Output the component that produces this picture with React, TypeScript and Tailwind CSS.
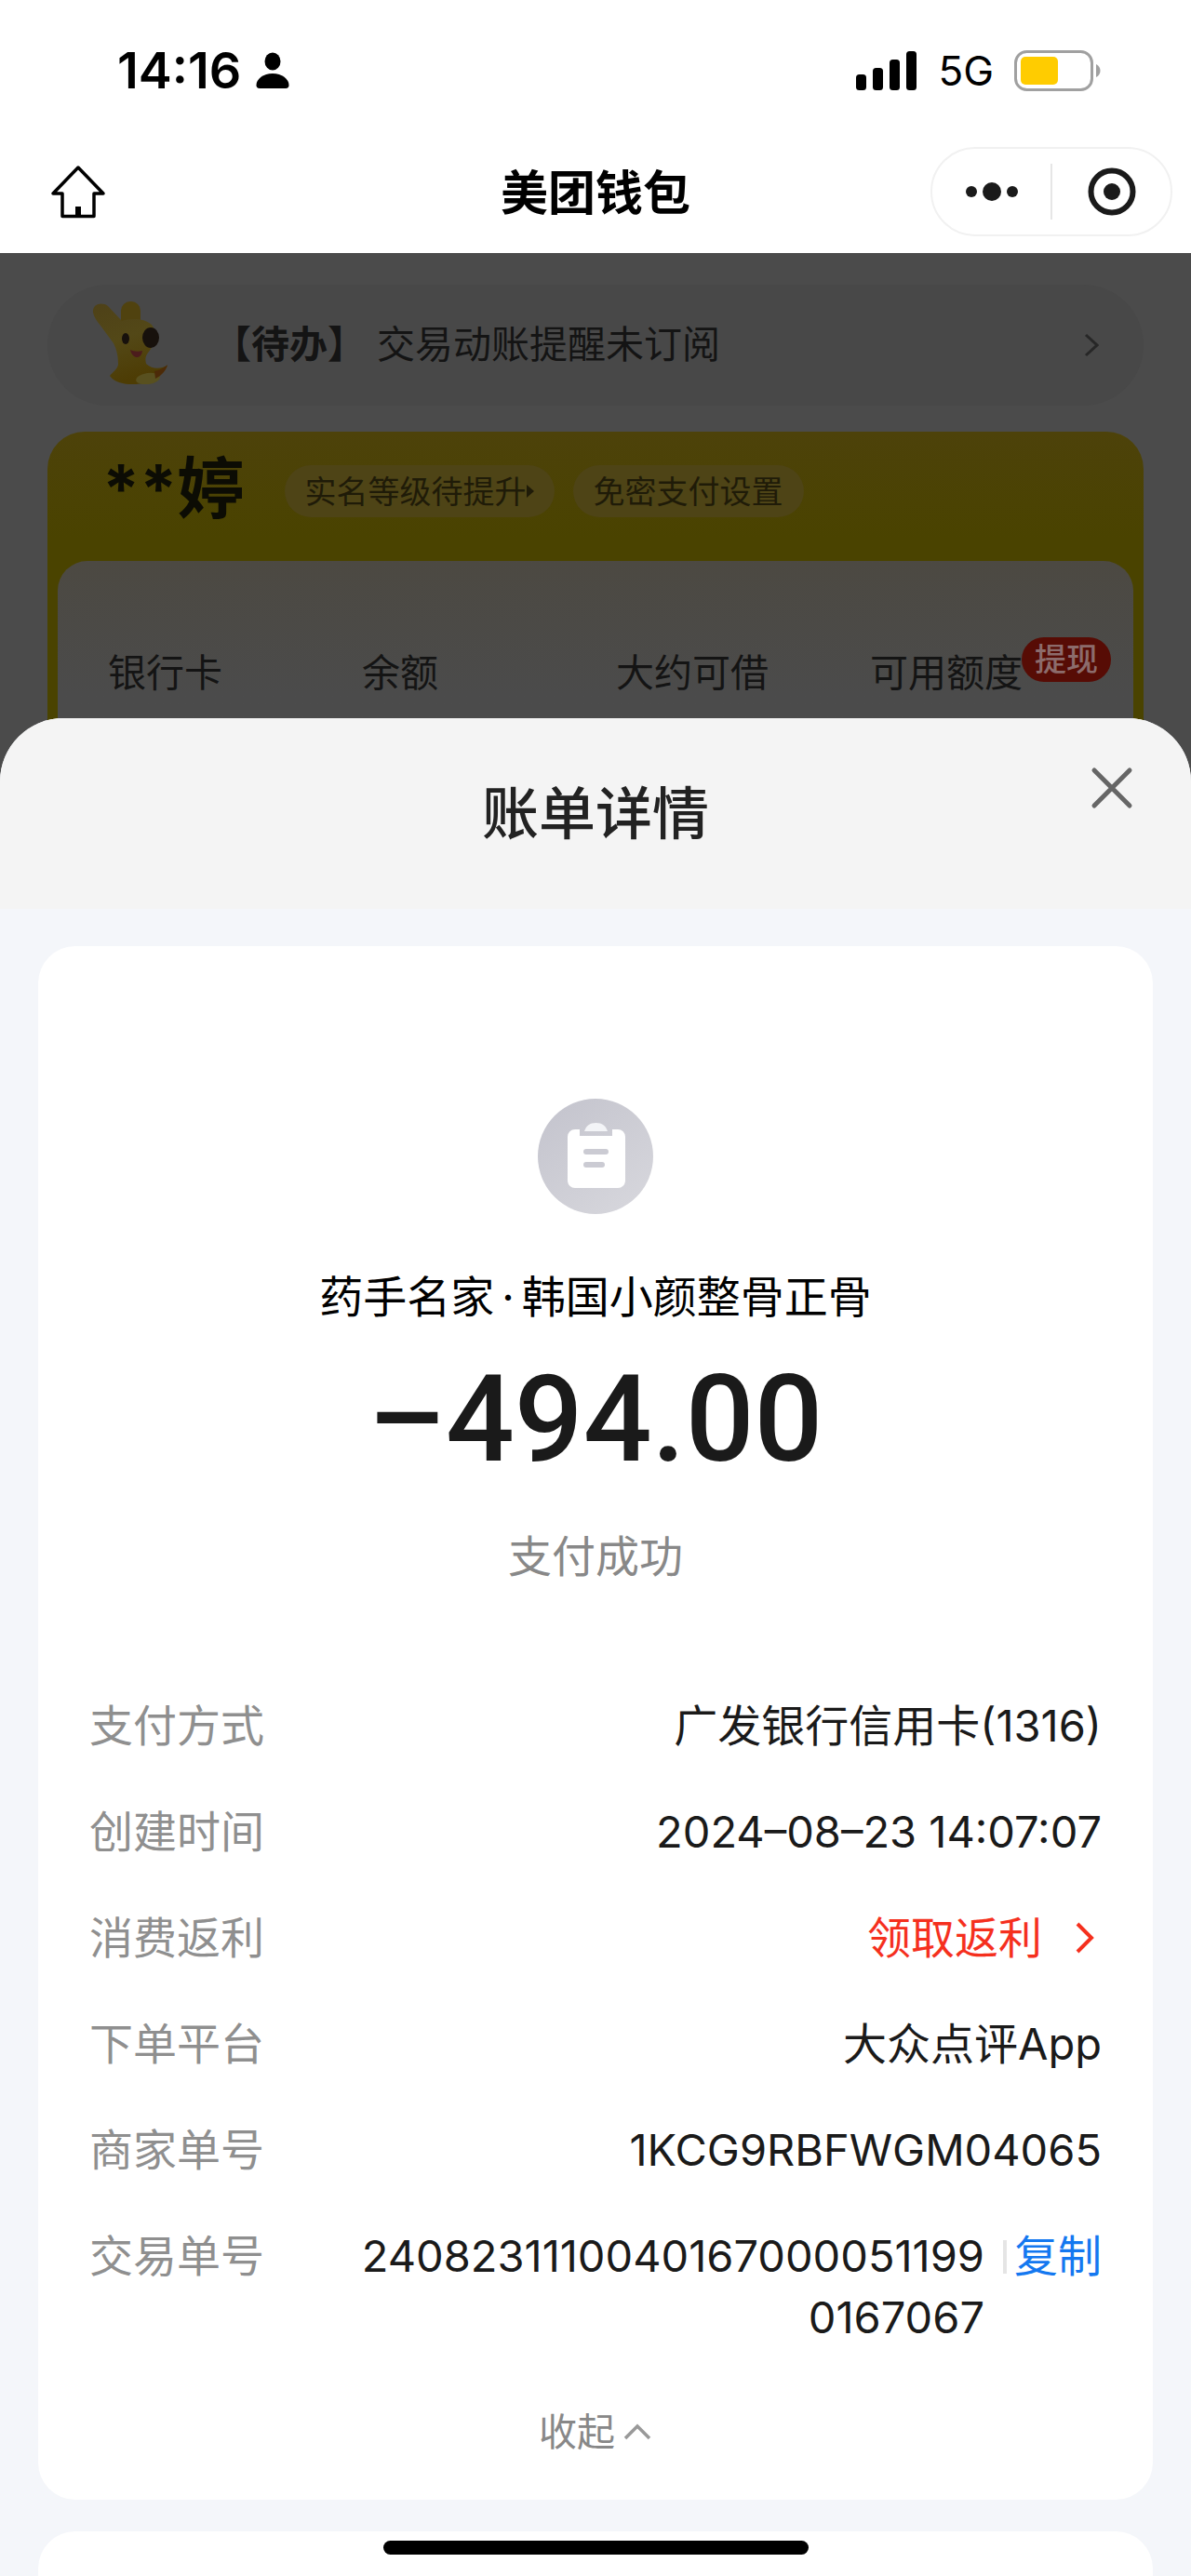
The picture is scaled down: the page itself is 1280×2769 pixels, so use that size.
import React from 'react'

const quickLinks = ['银行卡', '余额', '大约可借', '可用额度'];

const StatusBar = () => {
  return (
    <div className="flex h-38 items-center justify-between pl-[126px] pr-24">
      <div className="flex items-center gap-4">
        <span className="text-[54px] font-semibold leading-none text-black">14:16</span>
        <svg className="h-10 w-9" viewBox="0 0 36 40" fill="#000">
          <ellipse cx="18" cy="10" rx="8.5" ry="9.5" />
          <path d="M4 39C1.500 39 .5 37.500.5 35.500C.5 29 8 23 18 23S35.500 29 35.500 35.500C35.500 37.500 34.500 39 32 39Z" />
        </svg>
      </div>
      <div className="flex items-center gap-[22px]">
        <svg className="h-[42px] w-[66px]" viewBox="0 0 66 42" fill="#000">
          <rect x="0" y="25" width="11" height="17" rx="3.500" />
          <rect x="18" y="18" width="11" height="24" rx="3.500" />
          <rect x="36" y="9" width="11" height="33" rx="3.500" />
          <rect x="54" y="0" width="11" height="42" rx="3.500" />
        </svg>
        <span className="text-[44px] leading-none text-black">5G</span>
        <svg className="h-11 w-[94px]" viewBox="0 0 94 44">
          <rect x="1.500" y="1.500" width="82" height="41" rx="12" fill="none" stroke="#a0a0a0" strokeWidth="3" />
          <rect x="7" y="7" width="40" height="30" rx="5" fill="#ffcc00" />
          <path d="M88 15C94 18 94 26 88 29Z" fill="#a0a0a0" />
        </svg>
      </div>
    </div>
  );
};

const NavBar = () => {
  return (
    <header className="grid h-30 grid-cols-3 items-start px-5">
      <button aria-label="首页" className="ml-8 mt-5 h-16 w-16">
        <svg className="h-16 w-16" viewBox="0 0 64 64" fill="none" stroke="#000" strokeWidth="3.500" strokeLinejoin="round">
          <path d="M32 8L59 36H49V60.500H15V36H5Z" />
          <path d="M32 61V50" strokeWidth="6" />
        </svg>
      </button>
      <h1 className="mt-[26px] text-center text-[51px] font-semibold leading-[60px] text-black">美团钱包</h1>
      <div className="mt-1.5 flex h-24 w-65 items-center justify-self-end rounded-full border-2 border-[#f1f1f1]">
        <button aria-label="更多" className="flex flex-1 justify-center">
          <svg className="h-6 w-16" viewBox="0 0 64 24" fill="#1a1a1a">
            <circle cx="10" cy="12" r="6" />
            <circle cx="32" cy="12" r="10" />
            <circle cx="54" cy="12" r="6" />
          </svg>
        </button>
        <span className="h-15 w-0.5 bg-[#e6e6e6]" />
        <button aria-label="关闭小程序" className="flex flex-1 justify-center">
          <svg className="h-13 w-13" viewBox="0 0 52 52">
            <circle cx="26" cy="26" r="22.500" fill="none" stroke="#1a1a1a" strokeWidth="6" />
            <circle cx="26" cy="26" r="9" fill="#1a1a1a" />
          </svg>
        </button>
      </div>
    </header>
  );
};

const Mascot = () => {
  return (
    <svg className="mb-1.5 h-[90px] w-[84px]" viewBox="0 0 84 90">
      <defs>
        <linearGradient id="body" x1="0" y1="0" x2="0.3" y2="1">
          <stop offset="0" stopColor="#4e4118" />
          <stop offset="0.5" stopColor="#534817" />
          <stop offset="1" stopColor="#4d3c04" />
        </linearGradient>
      </defs>
      <rect x="31" y="1" width="21" height="32" rx="10" fill="#50420f" />
      <path d="M1 13C0 4 10 1 17 6L32 22C42 19 56 19 64 26C70 34 70 44 63 52C59 58 56 60 58 68C66 75 74 73 81 70C77 80 67 86 55 89C40 92 24 89 19 81C22 77 27 74 28 69C28 61 27 54 23 46L9 27C5 22 2 18 1 13Z" fill="url(#body)" />
      <ellipse cx="60" cy="84" rx="13" ry="6" transform="rotate(-8 60 84)" fill="#58501f" />
      <path d="M67 76C73 75 78 72 81 69C79 76 74 81 68 84Z" fill="#4c2a08" />
      <ellipse cx="36" cy="41" rx="4" ry="6" fill="#17110c" />
      <ellipse cx="63" cy="40" rx="9" ry="11" fill="#17110c" />
      <path d="M41 53C45 55 50 55 54 54C53 64 43 63 41 53Z" fill="#4c1c1c" />
    </svg>
  );
};

const Wallet = () => {
  return (
    <section className="bg-[#4b4b4b] px-[51px] pt-[34px]">
      <a href="#" className="flex h-[130px] items-center rounded-full bg-[#484848] pl-12 pr-12 text-[41px] text-[#141414]">
        <Mascot />
        <span className="ml-[46px] font-semibold">【待办】</span>
        <span className="ml-3 flex-1">交易动账提醒未订阅</span>
        <svg className="h-7 w-4" viewBox="0 0 16 28" fill="none" stroke="#272727" strokeWidth="3">
          <path d="M2 3L14 14L2 25" />
        </svg>
      </a>
      <div className="mt-7 rounded-t-[40px] bg-linear-to-b from-[#4d420a] to-[#4a4300] to-30% px-[11px]">
        <div className="flex h-[139px] items-start pl-12 pt-[26px]">
          <span className="text-[72px] font-bold leading-[70px] text-[#0c0c04]">**婷</span>
          <button className="ml-[43px] mt-2.5 flex h-14 items-center rounded-full bg-[#4e4416] px-[22px] text-[34px] text-[#1f1b08]">
            实名等级待提升
            <svg className="h-3.5 w-2" viewBox="0 0 8 14" fill="#1f1b08">
              <path d="M0 0L8 7L0 14Z" />
            </svg>
          </button>
          <button className="ml-5 mt-2.5 flex h-14 items-center rounded-full bg-[#4e4416] px-[22px] text-[34px] text-[#1f1b08]">
            免密支付设置
          </button>
        </div>
        <div className="h-60 rounded-t-[32px] bg-linear-to-b from-[#4c4942] to-[#4b4b4b] to-60% pl-[54px] pr-2.5 pt-[90px]">
          <div className="grid grid-cols-4 text-[41px] leading-[60px] text-[#141414]">
            {quickLinks.map((name) => (
              <a href="#" className="relative whitespace-nowrap" key={name}>
                {name}
                {name === '可用额度' && (
                  <span className="absolute -top-2 left-[163px] h-12 rounded-full bg-[#570c05] px-3.5 text-[34px] font-medium leading-[48px] text-[#8c6c6c]">
                    提现
                  </span>
                )}
              </a>
            ))}
          </div>
        </div>
      </div>
    </section>
  );
};

const Row = ({ label, children }: { label: string; children: React.ReactNode }) => {
  return (
    <div className="flex items-start justify-between">
      <dt className="text-[#8f8f8f]">{label}</dt>
      <dd className="flex text-right text-[#1a1a1a]">{children}</dd>
    </div>
  );
};

const BillCard = () => {
  return (
    <section className="rounded-[40px] bg-white px-[55px] pt-41 pb-[43px]">
      <div className="flex flex-col items-center">
        <svg className="h-[124px] w-[124px]" viewBox="0 0 124 124">
          <defs>
            <linearGradient id="disc" x1="0.2" y1="0.1" x2="0.8" y2="0.9">
              <stop offset="0" stopColor="#c6c6cf" />
              <stop offset="1" stopColor="#d5d5db" />
            </linearGradient>
          </defs>
          <circle cx="62" cy="62" r="62" fill="url(#disc)" />
          <path d="M40 33H45V40H80V33H86A8 8 0 0 1 94 41V88A8 8 0 0 1 86 96H40A8 8 0 0 1 32 88V41A8 8 0 0 1 40 33Z" fill="#fff" />
          <path d="M50 35C52 29 56 26 62.500 26S73 29 75 35Z" fill="#f3f4f7" />
          <path d="M52 57H73M52 71H69" stroke="#cbcbd3" strokeWidth="6" strokeLinecap="round" />
        </svg>
        <h3 className="mt-14 text-[47px] leading-[66px] text-black">
          药手名家<span className="mx-2">·</span>韩国小颜整骨正骨
        </h3>
        <p className="mt-6 font-['Roboto'] text-[130px] font-medium leading-[150px] text-[#1a1a1a]">–494.00</p>
        <p className="mt-[39px] text-[47px] leading-[66px] text-[#888]">支付成功</p>
      </div>
      <dl className="mt-[116px] flex flex-col gap-12 text-[47px] leading-[66px]">
        <Row label="支付方式">广发银行信用卡(1316)</Row>
        <Row label="创建时间">2024–08–23 14:07:07</Row>
        <Row label="消费返利">
          <a href="#" className="flex items-center text-[#f5301e]">
            领取返利
            <svg className="ml-9 mr-2 h-9 w-5" viewBox="0 0 20 36" fill="none" stroke="#f5301e" strokeWidth="4">
              <path d="M2 3L17 18L2 33" />
            </svg>
          </a>
        </Row>
        <Row label="下单平台">大众点评App</Row>
        <Row label="商家单号">1KCG9RBFWGM04065</Row>
        <Row label="交易单号">
          <span className="w-[680px] break-all">24082311100401670000511990167067</span>
          <span className="ml-5 mr-2 mt-4 h-9 w-1 bg-[#e5e5e5]" />
          <button className="self-start text-[#1478f0]">复制</button>
        </Row>
      </dl>
      <button className="mx-auto mt-15 flex items-center gap-2 text-[41px] leading-[60px] text-[#888]">
        收起
        <svg className="h-5 w-8" viewBox="0 0 32 20" fill="none" stroke="#999" strokeWidth="3.500">
          <path d="M3 17L16 4L29 17" />
        </svg>
      </button>
    </section>
  );
};

const App = () => {
  return (
    <main className="min-h-screen bg-white font-['Inter','Noto_Sans_CJK_SC',sans-serif]">
      <StatusBar />
      <NavBar />
      <Wallet />
      <div className="relative -mt-[71px] overflow-hidden rounded-t-[68px] bg-[#f4f6fa]">
        <div className="bg-[#f4f4f4] pt-[67px] pb-[66px]">
          <h2 className="text-center text-[61px] font-medium leading-[72px] text-[#222]">账单详情</h2>
          <button aria-label="关闭" className="absolute right-[59px] top-[49px] h-13 w-13">
            <svg className="h-13 w-13" viewBox="0 0 52 52" stroke="#666" strokeWidth="5" strokeLinecap="round">
              <path d="M7 7L45 45M45 7L7 45" />
            </svg>
          </button>
        </div>
        <div className="flex flex-col gap-[34px] px-[41px] pt-10">
          <BillCard />
          <div className="rounded-t-[40px] bg-white pt-2.5 pb-6">
            <div className="mx-auto h-[15px] w-[457px] rounded-full bg-black" />
          </div>
        </div>
      </div>
    </main>
  );
};

export default App;
